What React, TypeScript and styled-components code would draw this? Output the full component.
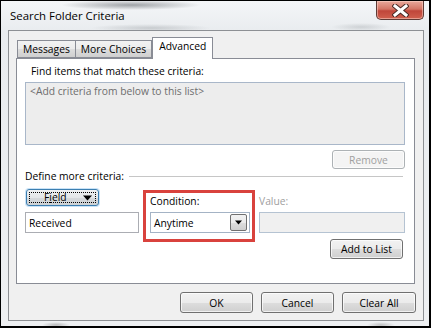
import styled, { createGlobalStyle } from 'styled-components';

const GlobalStyle = createGlobalStyle`
  html, body {
    margin: 0;
    padding: 0;
    background: #000;
  }
  body {
    font-family: 'Open Sans', 'Noto Sans', 'DejaVu Sans', sans-serif;
    font-size: 10.3px;
    color: #000;
  }
  * {
    box-sizing: border-box;
  }
`;

const Window = styled.div`
  width: 431px;
  height: 328px;
  border-style: solid;
  border-color: #000;
  border-width: 1px 2px 2px 1px;
  display: flex;
  flex-direction: column;
  background:
    radial-gradient(ellipse 70px 5px at 130px 4px, rgba(90, 95, 100, 0.55), transparent),
    radial-gradient(ellipse 60px 4px at 150px 27px, rgba(120, 125, 130, 0.3), transparent),
    radial-gradient(ellipse 30px 4px at 360px 26px, rgba(120, 125, 130, 0.25), transparent),
    radial-gradient(ellipse 14px 3px at 55px 324px, rgba(100, 100, 100, 0.4), transparent),
    radial-gradient(ellipse 14px 3px at 380px 324px, rgba(100, 100, 100, 0.35), transparent),
    linear-gradient(#f4f6f8, #e9ecef 30px, #eef0f2);
`;

const TitleBar = styled.div`
  height: 29px;
  display: flex;
  align-items: flex-start;
  padding-left: 9px;
  padding-right: 5px;
`;

const Title = styled.span`
  margin-top: 7px;
  font-size: 11.4px;
  line-height: 16px;
  color: #000;
`;

const CloseButton = styled.div`
  margin-left: auto;
  width: 48px;
  height: 19px;
  border: 1px solid #5e3b36;
  border-top: none;
  border-radius: 0 0 5px 5px;
  background: linear-gradient(#e9a99b, #d47666 45%, #c0463a 55%, #d0604e);
  box-shadow: inset 0 0 0 1px rgba(255, 220, 210, 0.5);
  display: flex;
  align-items: center;
  justify-content: center;
`;

const Client = styled.div`
  flex: 1;
  margin: 0 5px 5px 7px;
  border: 1px solid #8d9094;
  background: #f0f0f0;
  display: flex;
  flex-direction: column;
`;

const TabStrip = styled.div`
  display: flex;
  align-items: flex-end;
  height: 27px;
  padding-left: 8px;
  position: relative;
  z-index: 1;
`;

const Tab = styled.div<{ $active?: boolean }>`
  height: ${(p) => (p.$active ? '22px' : '18px')};
  padding: ${(p) => (p.$active ? '1px 6px 0 6px' : '1px 5px 0 5px')};
  margin-left: ${(p) => (p.$active ? '0' : '-1px')};
  margin-bottom: ${(p) => (p.$active ? '-1px' : '0')};
  border: 1px solid #898c95;
  border-bottom: ${(p) => (p.$active ? 'none' : '1px solid #898c95')};
  background: ${(p) => (p.$active ? '#fff' : 'linear-gradient(#f2f2f2, #ebebeb 50%, #dddddd 51%, #cfcfcf)')};
  line-height: 15px;
  white-space: nowrap;
  &:first-child {
    margin-left: 0;
  }
`;

const Panel = styled.div`
  margin: 0 8px 0 7px;
  height: 226px;
  border: 1px solid #898c95;
  background: #fff;
  display: flex;
  flex-direction: column;
  padding: 0 9px 0 8px;
`;

const Label = styled.div<{ $disabled?: boolean }>`
  line-height: 16px;
  color: ${(p) => (p.$disabled ? '#a0a0a0' : '#000')};
  white-space: nowrap;
`;

const FindLabel = styled(Label)`
  margin-top: 4px;
  padding-left: 6px;
`;

const CriteriaList = styled.div`
  margin-top: 3px;
  height: 63px;
  border: 1px solid #a9b7c9;
  background: #ededed;
  color: #6d6d6d;
  padding: 1px 4px;
  line-height: 15px;
`;

const Button = styled.div<{ $width?: number; $height?: number; $disabled?: boolean }>`
  width: ${(p) => p.$width ?? 73}px;
  height: ${(p) => p.$height ?? 21}px;
  border: 1px solid ${(p) => (p.$disabled ? '#adb2b5' : '#707070')};
  border-radius: 3px;
  background: ${(p) =>
    p.$disabled ? '#f4f4f4' : 'linear-gradient(#f2f2f2, #ebebeb 50%, #dddddd 51%, #cfcfcf)'};
  box-shadow: inset 0 0 0 1px rgba(255, 255, 255, 0.7);
  color: ${(p) => (p.$disabled ? '#a0a0a0' : '#000')};
  display: flex;
  align-items: center;
  justify-content: center;
  white-space: nowrap;
`;

const RemoveRow = styled.div`
  display: flex;
  justify-content: flex-end;
  margin-top: 5px;
`;

const SectionHeader = styled.div`
  display: flex;
  align-items: center;
  gap: 5px;
  height: 14px;
  padding-right: 2px;
  &::after {
    content: '';
    flex: 1;
    border-top: 1px solid #c6c6c6;
    margin-top: 1px;
  }
`;

const CriteriaRow = styled.div`
  display: flex;
  align-items: flex-start;
  margin-top: 6px;
`;

const FieldColumn = styled.div`
  width: 114px;
  display: flex;
  flex-direction: column;
`;

const FieldButton = styled.div`
  margin-left: 1px;
  width: 73px;
  height: 17px;
  border: 1px solid #3c7fb1;
  border-radius: 3px;
  background: linear-gradient(#eef0f2, #e4e6e8 50%, #d6d9dc 51%, #cdd1d4);
  box-shadow: 0 0 0 1px rgba(150, 200, 240, 0.5);
  padding: 2px;
  display: flex;
`;

const FocusRing = styled.div`
  flex: 1;
  border: 1px dotted #000;
  display: flex;
  align-items: center;
  padding: 0 3px 0 14px;
  line-height: 11px;
`;

const FieldText = styled.span`
  flex: 1;
  & u {
    text-decoration: underline;
  }
`;

const TextBox = styled.div<{ $width: number; $disabled?: boolean }>`
  width: ${(p) => p.$width}px;
  height: 21px;
  margin-top: 3px;
  border: 1px solid ${(p) => (p.$disabled ? '#b5c3d2' : '#abadb3')};
  background: ${(p) => (p.$disabled ? '#f0f0f0' : '#fff')};
  display: flex;
  align-items: center;
  padding: 0 3px;
`;

const ReceivedBox = styled(TextBox)`
  margin-top: 6px;
`;

const Highlight = styled.div`
  margin-left: 4px;
  margin-top: 1px;
  width: 115px;
  height: 52px;
  border: 3px solid #d9423d;
  padding: 0 0 0 4px;
  display: flex;
  flex-direction: column;
`;

const Select = styled.div`
  margin-top: 3px;
  width: 100px;
  height: 21px;
  border: 1px solid #a4b3c5;
  background: #fff;
  display: flex;
  align-items: center;
  padding: 1px 2px 1px 3px;
`;

const SelectText = styled.span`
  flex: 1;
`;

const DropArrow = styled.div`
  width: 17px;
  height: 17px;
  border: 1px solid #707070;
  border-radius: 2px;
  background: linear-gradient(#f2f2f2, #ebebeb 50%, #dddddd 51%, #cfcfcf);
  display: flex;
  align-items: center;
  justify-content: center;
`;

const ValueColumn = styled.div`
  margin-left: 4px;
  margin-top: 4px;
  display: flex;
  flex-direction: column;
`;

const AddButton = styled(Button)`
  align-self: flex-end;
  margin-top: 6px;
  margin-right: 2px;
`;

const Footer = styled.div`
  display: flex;
  justify-content: flex-end;
  gap: 8px;
  padding: 8px 7px 0 0;
`;

function Triangle({ size = 9 }: { size?: number }) {
  return (
    <svg width={size} height={Math.ceil(size / 2) + 1} viewBox="0 0 9 5">
      <path d="M0 0 H9 L4.5 5 Z" fill="#000" />
    </svg>
  );
}

function CloseGlyph() {
  return (
    <svg width="17" height="13" viewBox="0 0 17 13">
      <path d="M3 2 L14 11 M14 2 L3 11" stroke="#4a2a26" strokeWidth="5" strokeLinecap="square" />
      <path d="M3 2 L14 11 M14 2 L3 11" stroke="#fff" strokeWidth="3" strokeLinecap="square" />
    </svg>
  );
}

export default function App() {
  return (
    <>
      <GlobalStyle />
      <Window>
        <TitleBar>
          <Title>Search Folder Criteria</Title>
          <CloseButton>
            <CloseGlyph />
          </CloseButton>
        </TitleBar>
        <Client>
          <TabStrip>
            <Tab>Messages</Tab>
            <Tab>More Choices</Tab>
            <Tab $active>Advanced</Tab>
          </TabStrip>
          <Panel>
            <FindLabel>Find items that match these criteria:</FindLabel>
            <CriteriaList>&lt;Add criteria from below to this list&gt;</CriteriaList>
            <RemoveRow>
              <Button $width={73} $height={19} $disabled>
                Remove
              </Button>
            </RemoveRow>
            <SectionHeader>
              <Label>Define more criteria:</Label>
            </SectionHeader>
            <CriteriaRow>
              <FieldColumn>
                <FieldButton>
                  <FocusRing>
                    <FieldText>
                      F<u>i</u>eld
                    </FieldText>
                    <Triangle />
                  </FocusRing>
                </FieldButton>
                <ReceivedBox $width={114}>Received</ReceivedBox>
              </FieldColumn>
              <Highlight>
                <Label>Condition:</Label>
                <Select>
                  <SelectText>Anytime</SelectText>
                  <DropArrow>
                    <Triangle size={7} />
                  </DropArrow>
                </Select>
              </Highlight>
              <ValueColumn>
                <Label $disabled>Value:</Label>
                <TextBox $width={146} $disabled />
                <AddButton $width={73} $height={20}>
                  Add to List
                </AddButton>
              </ValueColumn>
            </CriteriaRow>
          </Panel>
          <Footer>
            <Button>OK</Button>
            <Button>Cancel</Button>
            <Button $width={74}>Clear All</Button>
          </Footer>
        </Client>
      </Window>
    </>
  );
}
